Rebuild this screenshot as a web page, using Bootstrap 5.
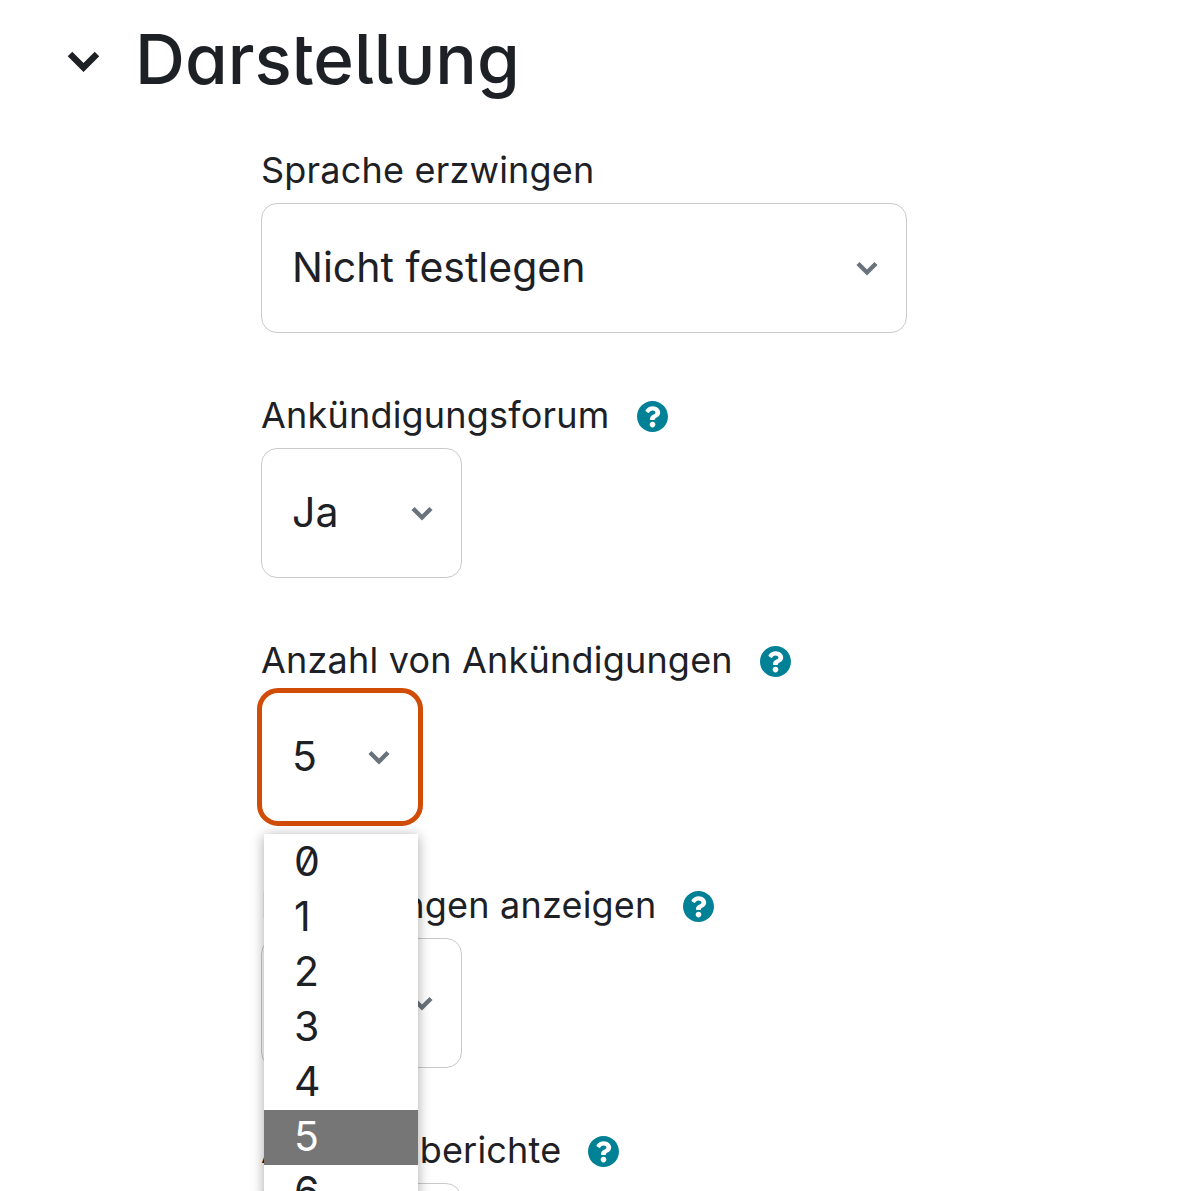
<!DOCTYPE html>
<html lang="de">
<head>
<meta charset="utf-8">
<title>Darstellung</title>
<link href="https://cdn.jsdelivr.net/npm/bootstrap@5.3.0/dist/css/bootstrap.min.css" rel="stylesheet">
<style>
html, body { height: 1191px; overflow: hidden; }
body { font-family: Inter, "Liberation Sans", sans-serif; color: #1d2125; background: #fff; }
.page-wrap { padding: 0 0 0 67px; }
.sect-head { height: 119px; gap: 35px; }
.sect-chev { width: 33px; height: 22px; flex: none; margin-top: 3px; color: #1d2125; }
.sect-title { font-size: 69.200px; font-weight: 500; line-height: 119px; margin: 0; color: #1d2125; font-feature-settings: "cv11" 1, "salt" 1, "ss03" 1; }
.field-col { margin-left: 194px; width: 646px; }
.field-row { height: 245px; padding-top: 24px; }
.field-label { font-size: 36px; line-height: 52px; height: 54px; margin: 0; gap: 27px; letter-spacing: .2px; }
.help-ico { width: 31px; height: 31px; flex: none; margin-top: 2px; color: #008196; }
.field-sel.form-select {
  font-family: Inter, "Liberation Sans", sans-serif; letter-spacing: 0;
  font-size: 41px; line-height: 60px; height: 130px; color: #1d2125;
  padding: 0 70px 2px 30px; border: 1px solid #c8cacc; border-radius: 16px;
  background-image: url("data:image/svg+xml,%3csvg xmlns='http://www.w3.org/2000/svg' viewBox='0 0 22 15'%3e%3cpath fill='none' stroke='%236a737b' stroke-width='4.400' d='M2 2.500l9 9 9-9'/%3e%3c/svg%3e");
  background-size: 22px 15px; background-position: right 28px center; margin-top: 6px;
}
.sel-wide { width: 646px; }
.sel-mid { width: 201px; }
.sel-open { position: relative; }
.sel-open .field-sel.form-select {
  width: 166px; height: 138px; margin-top: 1px; margin-left: -4px;
  border: 5px solid #d14c07; border-radius: 21px; box-shadow: none; outline: 0; padding-left: 30px;
}
.opt-menu {
  position: absolute; left: 3px; top: 146px; width: 154px; height: 400px; z-index: 5; background: #fff;
  padding-top: 1px; box-shadow: 0 2px 12px rgba(0,0,0,.35); font-size: 41px; line-height: 53px;
  font-feature-settings: "zero";
}
.opt-item { height: 55px; padding-left: 30px; }
.opt-cur { background: #767676; color: #fff; }
</style>
</head>
<body>
<div class="page-wrap">
  <div class="sect-head d-flex align-items-center">
    <svg class="sect-chev" viewBox="0 0 33 22" aria-hidden="true"><path fill="none" stroke="currentColor" stroke-width="6.400" d="M3 4l13.500 13.500L30 4"/></svg>
    <h3 class="sect-title">Darstellung</h3>
  </div>
  <div class="field-col">
    <div class="field-row">
      <div class="field-label d-flex align-items-center">Sprache erzwingen</div>
      <select class="form-select field-sel sel-wide"><option>Nicht festlegen</option></select>
    </div>
    <div class="field-row">
      <div class="field-label d-flex align-items-center">Ankündigungsforum
        <svg class="help-ico" viewBox="8 8 496 496" aria-hidden="true"><path fill="currentColor" d="M504 256c0 136.997-111.043 248-248 248S8 392.997 8 256C8 119.083 119.043 8 256 8s248 111.083 248 248zM262.655 90c-54.497 0-89.255 22.957-116.549 63.758-3.536 5.286-2.353 12.415 2.715 16.258l34.699 26.31c5.205 3.947 12.621 3.008 16.665-2.122 17.864-22.658 30.113-35.797 57.303-35.797 20.429 0 45.698 13.148 45.698 32.958 0 14.976-12.363 22.667-32.534 33.976C247.128 238.528 216 254.941 216 296v4c0 6.627 5.373 12 12 12h56c6.627 0 12-5.373 12-12v-1.333c0-28.462 83.186-29.647 83.186-106.667 0-58.002-60.165-102-116.531-102zM256 338c-25.365 0-46 20.635-46 46 0 25.364 20.635 46 46 46s46-20.636 46-46c0-25.365-20.635-46-46-46z"/></svg>
      </div>
      <select class="form-select field-sel sel-mid"><option>Ja</option></select>
    </div>
    <div class="field-row">
      <div class="field-label d-flex align-items-center">Anzahl von Ankündigungen
        <svg class="help-ico" viewBox="8 8 496 496" aria-hidden="true"><path fill="currentColor" d="M504 256c0 136.997-111.043 248-248 248S8 392.997 8 256C8 119.083 119.043 8 256 8s248 111.083 248 248zM262.655 90c-54.497 0-89.255 22.957-116.549 63.758-3.536 5.286-2.353 12.415 2.715 16.258l34.699 26.31c5.205 3.947 12.621 3.008 16.665-2.122 17.864-22.658 30.113-35.797 57.303-35.797 20.429 0 45.698 13.148 45.698 32.958 0 14.976-12.363 22.667-32.534 33.976C247.128 238.528 216 254.941 216 296v4c0 6.627 5.373 12 12 12h56c6.627 0 12-5.373 12-12v-1.333c0-28.462 83.186-29.647 83.186-106.667 0-58.002-60.165-102-116.531-102zM256 338c-25.365 0-46 20.635-46 46 0 25.364 20.635 46 46 46s46-20.636 46-46c0-25.365-20.635-46-46-46z"/></svg>
      </div>
      <div class="sel-open">
        <select class="form-select field-sel"><option>5</option></select>
        <div class="opt-menu">
          <div class="opt-item">0</div>
          <div class="opt-item">1</div>
          <div class="opt-item">2</div>
          <div class="opt-item">3</div>
          <div class="opt-item">4</div>
          <div class="opt-item opt-cur">5</div>
          <div class="opt-item">6</div>
        </div>
      </div>
    </div>
    <div class="field-row">
      <div class="field-label d-flex align-items-center">Bewertungen anzeigen
        <svg class="help-ico" viewBox="8 8 496 496" aria-hidden="true"><path fill="currentColor" d="M504 256c0 136.997-111.043 248-248 248S8 392.997 8 256C8 119.083 119.043 8 256 8s248 111.083 248 248zM262.655 90c-54.497 0-89.255 22.957-116.549 63.758-3.536 5.286-2.353 12.415 2.715 16.258l34.699 26.31c5.205 3.947 12.621 3.008 16.665-2.122 17.864-22.658 30.113-35.797 57.303-35.797 20.429 0 45.698 13.148 45.698 32.958 0 14.976-12.363 22.667-32.534 33.976C247.128 238.528 216 254.941 216 296v4c0 6.627 5.373 12 12 12h56c6.627 0 12-5.373 12-12v-1.333c0-28.462 83.186-29.647 83.186-106.667 0-58.002-60.165-102-116.531-102zM256 338c-25.365 0-46 20.635-46 46 0 25.364 20.635 46 46 46s46-20.636 46-46c0-25.365-20.635-46-46-46z"/></svg>
      </div>
      <select class="form-select field-sel sel-mid"><option>Ja</option></select>
    </div>
    <div class="field-row">
      <div class="field-label d-flex align-items-center">Aktivitätsberichte
        <svg class="help-ico" viewBox="8 8 496 496" aria-hidden="true"><path fill="currentColor" d="M504 256c0 136.997-111.043 248-248 248S8 392.997 8 256C8 119.083 119.043 8 256 8s248 111.083 248 248zM262.655 90c-54.497 0-89.255 22.957-116.549 63.758-3.536 5.286-2.353 12.415 2.715 16.258l34.699 26.31c5.205 3.947 12.621 3.008 16.665-2.122 17.864-22.658 30.113-35.797 57.303-35.797 20.429 0 45.698 13.148 45.698 32.958 0 14.976-12.363 22.667-32.534 33.976C247.128 238.528 216 254.941 216 296v4c0 6.627 5.373 12 12 12h56c6.627 0 12-5.373 12-12v-1.333c0-28.462 83.186-29.647 83.186-106.667 0-58.002-60.165-102-116.531-102zM256 338c-25.365 0-46 20.635-46 46 0 25.364 20.635 46 46 46s46-20.636 46-46c0-25.365-20.635-46-46-46z"/></svg>
      </div>
      <select class="form-select field-sel sel-mid"><option>Ja</option></select>
    </div>
  </div>
</div>
<script src="https://cdn.jsdelivr.net/npm/bootstrap@5.3.0/dist/js/bootstrap.bundle.min.js"></script>
</body>
</html>
